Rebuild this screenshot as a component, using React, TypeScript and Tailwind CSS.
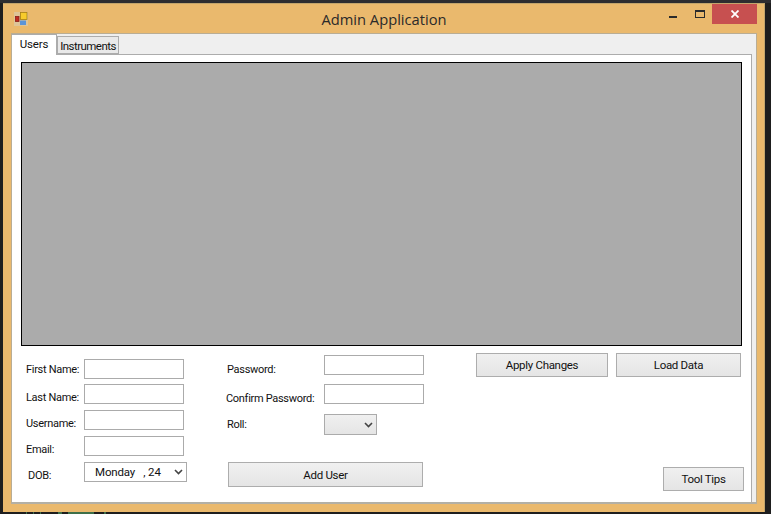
const labelClass = 'block text-[11px] leading-[14px] tracking-[-0.3px] text-[#111]';
const fieldClass = 'block h-[20px] border border-[#ababab] bg-white';
const buttonClass =
  'flex items-center justify-center border border-[#adadad] bg-gradient-to-b from-[#f0f0f0] to-[#e5e5e5] pt-[1px] text-[11.5px] tracking-[-0.3px] text-[#111]';

function Chevron({ className }: { className: string }) {
  return (
    <svg width="9" height="6" viewBox="0 0 9 6" className={className}>
      <path d="M1 1 L4.5 4.5 L8 1" fill="none" stroke="#444" strokeWidth="1.6" />
    </svg>
  );
}

function AppIcon() {
  return (
    <svg width="14" height="14" viewBox="0 0 14 14" className="shrink-0">
      <rect x="0" y="0" width="14" height="14" fill="#d4cdbb" opacity="0.55" />
      <rect x="1.5" y="4.5" width="3.5" height="5" fill="#c02a20" stroke="#8a1f18" strokeWidth="0.8" />
      <rect x="6.5" y="0.5" width="6.5" height="7" fill="#f7cb2c" stroke="#a87f10" strokeWidth="0.8" />
      <rect x="6" y="8.5" width="6" height="4.5" fill="#5b94d8" />
    </svg>
  );
}

function WindowButtons() {
  return (
    <div className="flex items-start">
      <div className="mt-[12px] h-[2px] w-[8px] bg-[#2b2b2b]" />
      <div className="ml-[18px] mt-[6px] h-[8px] w-[10px] border border-t-2 border-[#2b2b2b]" />
      <div className="ml-[7px] flex h-[20px] w-[45px] items-center justify-center bg-[#c75050]">
        <svg width="8" height="8" viewBox="0 0 8 8">
          <path d="M0.5 0.5 L7.5 7.5 M7.5 0.5 L0.5 7.5" stroke="#fff" strokeWidth="1.8" />
        </svg>
      </div>
    </div>
  );
}

export default function App() {
  return (
    <div
      className="h-[514px] w-[771px] overflow-hidden bg-[#1e1e1e]"
      style={{ fontFamily: 'Roboto, "Liberation Sans", Arial, sans-serif' }}
    >
      <div className="h-[3px] bg-[#2d2d30]" />
      <div className="ml-[3px] flex h-[509px] w-[762px] flex-col border-t border-r border-[#c2a56c] bg-[#eab96d] pl-[8px] pr-[7px]">
        {/* title bar */}
        <div className="flex h-[29px] shrink-0 items-start">
          <div className="w-[300px] pl-[3px] pt-[8px]">
            <AppIcon />
          </div>
          <div
            className="mt-[5px] w-[146px] whitespace-nowrap text-center text-[14.7px] leading-[20px] text-[#2a2a2a]"
            style={{ fontFamily: '"Open Sans", sans-serif' }}
          >
            Admin Application
          </div>
          <div className="ml-auto">
            <WindowButtons />
          </div>
        </div>

        {/* client area */}
        <div className="flex h-[471px] shrink-0 flex-col border border-b-2 border-[#b9ad94] border-b-[#b3b0a6] bg-[#efefef]">
          <div className="flex h-[20px] shrink-0 items-end">
            <div className="z-10 -mb-[1px] flex h-[21px] w-[45px] items-start justify-center border-t border-r border-[#acacac] bg-white pt-[2px] text-[11.5px] leading-[14px] tracking-[-0.15px] text-[#111]">
              Users
            </div>
            <div className="flex h-[18px] w-[62px] items-center justify-center border border-[#acacac] bg-[#e9e9e9] pt-[3px] text-[11.5px] tracking-[-0.55px] text-[#111]">
              Instruments
            </div>
          </div>

          <div className="mr-[4px] flex min-h-0 flex-1 flex-col border-t border-r border-[#acacac] bg-white pl-[9px] pr-[10px] pt-[7px]">
            <div className="h-[284px] w-[721px] shrink-0 border border-black bg-[#ababab]" />

            <div className="flex">
              {/* left column */}
              <div className="w-[206px] shrink-0 pl-[5px] pt-[13px]">
                <div className="flex h-[20px] items-center">
                  <span className={`${labelClass} mt-[2px] w-[58px]`}>First Name:</span>
                  <div className={`${fieldClass} w-[100px]`} />
                </div>
                <div className="mt-[5px] flex h-[20px] items-center">
                  <span className={`${labelClass} mt-[8px] w-[58px]`}>Last Name:</span>
                  <div className={`${fieldClass} w-[100px]`} />
                </div>
                <div className="mt-[6px] flex h-[20px] items-center">
                  <span className={`${labelClass} mt-[8px] w-[58px]`}>Username:</span>
                  <div className={`${fieldClass} w-[100px]`} />
                </div>
                <div className="mt-[6px] flex h-[20px] items-center">
                  <span className={`${labelClass} mt-[8px] w-[58px]`}>Email:</span>
                  <div className={`${fieldClass} w-[100px]`} />
                </div>
                <div className="mt-[6px] flex h-[20px] items-center">
                  <span className={`${labelClass} mt-[8px] w-[58px] pl-[2px]`}>DOB:</span>
                  <div className="relative flex h-[20px] w-[103px] items-center border border-[#ababab] bg-white pl-[10px] pt-[1px] text-[11.5px] tracking-[-0.15px] text-[#111]">
                    Monday&nbsp;&nbsp;&nbsp;, 24
                    <Chevron className="absolute right-[3px] top-[6px]" />
                  </div>
                </div>
              </div>

              {/* middle column */}
              <div className="w-[249px] shrink-0 pt-[9px]">
                <div className="flex h-[20px] items-center">
                  <span className={`${labelClass} mt-[10px] w-[97px]`}>Password:</span>
                  <div className={`${fieldClass} w-[100px]`} />
                </div>
                <div className="mt-[9px] flex h-[20px] items-center">
                  <span className={`${labelClass} mt-[10px] -ml-[1px] mr-[1px] w-[97px]`}>Confirm Password:</span>
                  <div className={`${fieldClass} w-[100px]`} />
                </div>
                <div className="mt-[10px] flex h-[21px] items-center">
                  <span className={`${labelClass} w-[97px]`}>Roll:</span>
                  <div className="relative h-[21px] w-[53px] border border-[#ababab] bg-gradient-to-b from-[#f0f0f0] to-[#e5e5e5]">
                    <Chevron className="absolute right-[3px] top-[7px]" />
                  </div>
                </div>
                <div className={`${buttonClass} ml-[1px] mt-[27px] h-[25px] w-[195px] pt-[2px]`}>Add User</div>
              </div>

              {/* right column */}
              <div className="flex min-w-0 flex-1 flex-col pt-[7px]">
                <div className="flex gap-[8px]">
                  <div className={`${buttonClass} h-[24px] w-[132px]`}>Apply Changes</div>
                  <div className={`${buttonClass} h-[24px] w-[125px]`}>Load Data</div>
                </div>
                <div className={`${buttonClass} ml-[187px] mt-[90px] h-[24px] w-[81px]`}>Tool Tips</div>
              </div>
            </div>
          </div>
        </div>
      </div>

      {/* bits of the editor text showing under the window */}
      <div className="ml-[26px] flex h-[2px] gap-[6px]">
        <div className="h-[2px] w-[1px] bg-[#3e6f49]" />
        <div className="h-[2px] w-[1px] bg-[#3e6f49]" />
        <div className="h-[2px] w-[1px] bg-[#3e6f49]" />
        <div className="ml-[11px] h-[2px] w-[4px] bg-[#3e6f49]" />
        <div className="h-[2px] w-[26px] bg-[#3e6f49]" />
        <div className="ml-[4px] h-[2px] w-[2px] bg-[#3e6f49]" />
      </div>
    </div>
  );
}
